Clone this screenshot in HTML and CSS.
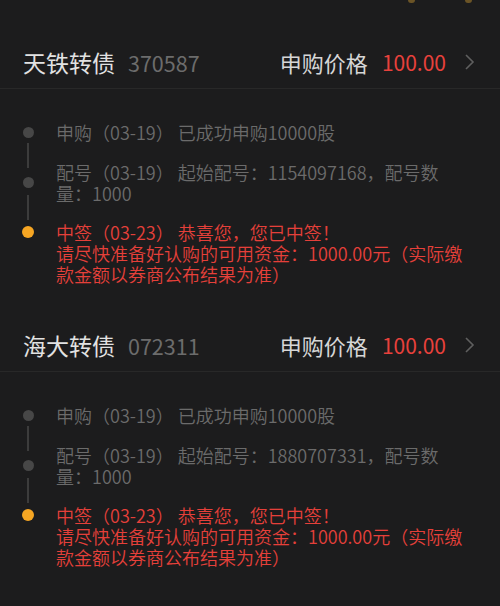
FILE: index.html
```html
<!DOCTYPE html>
<html lang="zh-CN">

<head>
    <meta charset="UTF-8">
    <meta name="viewport" content="width=device-width, initial-scale=1.0">
    <title>中签查询</title>
    <link rel="stylesheet" href="styles.css">
</head>

<body>
    <div class="topbar">
        <span class="glint"></span>
        <span class="glint"></span>
    </div>

    <div class="bond">
        <div class="bond-head">
            <span class="bond-name">天铁转债</span>
            <span class="bond-code">370587</span>
            <span class="price-label">申购价格</span>
            <span class="price">100.00</span>
            <svg class="chevron" width="12" height="18" viewBox="0 0 12 18">
                <path d="M2 2 L9 9 L2 16" fill="none" stroke="#5f5f5f" stroke-width="1.6" />
            </svg>
        </div>
        <div class="steps">
            <div class="step">
                <div class="marker"><span class="dot"></span></div>
                <p class="step-text">申购（03-19） 已成功申购10000股</p>
            </div>
            <div class="step step-two">
                <div class="marker"><span class="line"></span><span class="dot"></span></div>
                <p class="step-text">配号（03-19） 起始配号：1154097168，配号数量：1000</p>
            </div>
            <div class="step step-win">
                <div class="marker"><span class="line"></span><span class="dot"></span></div>
                <p class="step-text">中签（03-23） 恭喜您，您已中签！<br>请尽快准备好认购的可用资金：1000.00元（实际缴款金额以券商公布结果为准）</p>
            </div>
        </div>
    </div>

    <div class="bond">
        <div class="bond-head">
            <span class="bond-name">海大转债</span>
            <span class="bond-code">072311</span>
            <span class="price-label">申购价格</span>
            <span class="price">100.00</span>
            <svg class="chevron" width="12" height="18" viewBox="0 0 12 18">
                <path d="M2 2 L9 9 L2 16" fill="none" stroke="#5f5f5f" stroke-width="1.6" />
            </svg>
        </div>
        <div class="steps">
            <div class="step">
                <div class="marker"><span class="dot"></span></div>
                <p class="step-text">申购（03-19） 已成功申购10000股</p>
            </div>
            <div class="step step-two">
                <div class="marker"><span class="line"></span><span class="dot"></span></div>
                <p class="step-text">配号（03-19） 起始配号：1880707331，配号数量：1000</p>
            </div>
            <div class="step step-win">
                <div class="marker"><span class="line"></span><span class="dot"></span></div>
                <p class="step-text">中签（03-23） 恭喜您，您已中签！<br>请尽快准备好认购的可用资金：1000.00元（实际缴款金额以券商公布结果为准）</p>
            </div>
        </div>
    </div>
</body>

</html>
```

FILE: styles.css
```css
html,
body {
    margin: 0;
    background-color: #1c1c1d;
    font-family: "Noto Sans CJK SC", "Noto Sans", sans-serif;
    overflow: hidden;
}

.topbar {
    height: 40px;
    display: flex;
    justify-content: flex-end;
    gap: 50px;
    padding-right: 28px;
}

.glint {
    width: 7px;
    height: 3px;
    border-radius: 0 0 4px 4px;
    background-color: #6b5426;
}

.bond-head {
    height: 48px;
    display: flex;
    align-items: center;
    padding: 0 24px 0 23px;
    border-bottom: 1px solid #282828;
}

.bond-name {
    font-size: 23px;
    color: #e2e2e2;
    margin-top: -4px;
}

.bond-code {
    font-size: 21.5px;
    color: #6c6c6c;
    margin-left: 13px;
    margin-top: -4px;
}

.price-label {
    font-size: 22px;
    color: #d6d6d6;
    margin-left: auto;
    margin-top: -4px;
}

.price {
    font-size: 21px;
    color: #e8413c;
    margin-left: 14px;
    margin-top: -4px;
}

.chevron {
    margin-left: 18px;
    margin-top: -4px;
}

.steps {
    display: flex;
    flex-direction: column;
    gap: 19px;
    padding: 33px 0 38px;
}

.step {
    display: flex;
}

.marker {
    width: 56px;
    flex-shrink: 0;
    display: flex;
    flex-direction: column;
    align-items: center;
}

.dot {
    width: 11px;
    height: 11px;
    border-radius: 50%;
    background-color: #474747;
    margin-top: 5px;
}

.line {
    width: 2px;
    height: 25px;
    background-color: #3c3c3c;
}

.step-two .line {
    margin-top: -19px;
}

.step-two .dot {
    margin-top: 9px;
}

.step-win {
    margin-top: -1px;
}

.step-win .line {
    margin-top: -27px;
}

.step-win .dot {
    width: 12px;
    height: 12px;
    margin-top: 6px;
    background-color: #f6a623;
}

.step-text {
    margin: 0;
    padding-right: 34px;
    font-size: 18px;
    font-weight: 350;
    line-height: 21px;
    color: #6b6b6b;
}

.step-win .step-text {
    color: #e5403a;
}
```
